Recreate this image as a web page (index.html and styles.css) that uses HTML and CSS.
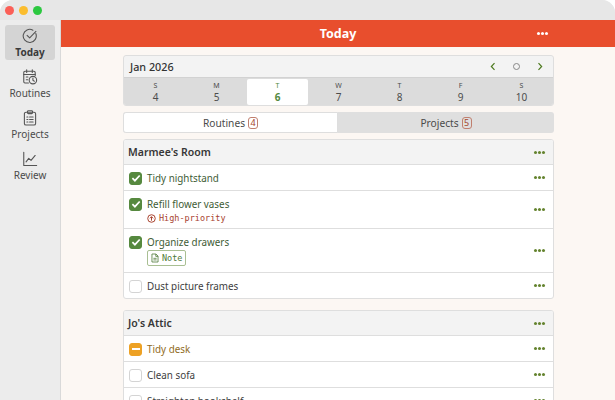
FILE: index.html

```html
<!DOCTYPE html>
<html lang="en">
<head>
    <meta charset="UTF-8">
    <meta name="viewport" content="width=device-width, initial-scale=1.0">
    <title>Today</title>
    <link rel="stylesheet" href="styles.css">
</head>
<body>
    <div class="window">
        <div class="titlebar">
            <span class="light red"></span>
            <span class="light yellow"></span>
            <span class="light green"></span>
        </div>
        <div class="app">
            <nav class="sidebar">
                <a class="nav-item active">
                    <svg class="nav-icon" viewBox="0.3 0.3 15.4 15.4"><path d="M13.6 5.6A6.3 6.3 0 1 1 10.8 2.4"/><path d="M5.2 7.4l2.5 2.5 6-6.3"/></svg>
                    <span>Today</span>
                </a>
                <a class="nav-item">
                    <svg class="nav-icon" viewBox="0.3 0.3 15.4 15.4"><path d="M6.5 13.8H3.2a1.2 1.2 0 0 1-1.2-1.2V3.6a1.2 1.2 0 0 1 1.2-1.2h8.6a1.2 1.2 0 0 1 1.2 1.2v3"/><path d="M2 5.6h11M4.8 1v2.6M10.2 1v2.6M4.4 8h1.6M4.4 10.6h1.4"/><circle cx="10.8" cy="11" r="3.6"/><path d="M10.8 9v2.2l1.4.8"/></svg>
                    <span>Routines</span>
                </a>
                <a class="nav-item">
                    <svg class="nav-icon" viewBox="0.3 0.3 15.4 15.4"><rect x="2.6" y="2.4" width="10.8" height="12.4" rx="1.6"/><rect x="5.6" y="1" width="4.8" height="2.8" rx=".8"/><path d="M5 7h1M5 9.4h1M5 11.8h1M7.6 7h3.4M7.6 9.4h3.4M7.6 11.8h3.4"/></svg>
                    <span>Projects</span>
                </a>
                <a class="nav-item">
                    <svg class="nav-icon" viewBox="0.3 0.3 15.4 15.4"><path d="M2 1.6v12.6h12.4"/><path d="M4.2 10.8l2.6-3.4 2.2 2 4-4.8"/></svg>
                    <span>Review</span>
                </a>
            </nav>
            <div class="main">
                <header class="topbar">
                    <h1>Today</h1>
                    <span class="dots white"><i></i><i></i><i></i></span>
                </header>
                <div class="content">
                    <section class="calendar">
                        <div class="cal-head">
                            <span class="cal-month">Jan 2026</span>
                            <div class="cal-controls">
                                <svg class="chev" viewBox="0 0 8 12"><path d="M6 1.5L1.8 6 6 10.5"/></svg>
                                <span class="cal-today"></span>
                                <svg class="chev" viewBox="0 0 8 12"><path d="M2 1.5L6.2 6 2 10.5"/></svg>
                            </div>
                        </div>
                        <div class="cal-days">
                            <div class="day"><small>S</small><b>4</b></div>
                            <div class="day"><small>M</small><b>5</b></div>
                            <div class="day current"><small>T</small><b>6</b></div>
                            <div class="day"><small>W</small><b>7</b></div>
                            <div class="day"><small>T</small><b>8</b></div>
                            <div class="day"><small>F</small><b>9</b></div>
                            <div class="day"><small>S</small><b>10</b></div>
                        </div>
                    </section>

                    <div class="tabs">
                        <div class="tab selected">Routines <span class="count">4</span></div>
                        <div class="tab">Projects <span class="count">5</span></div>
                    </div>

                    <section class="group">
                        <div class="group-head">
                            <h2>Marmee's Room</h2>
                            <span class="dots"><i></i><i></i><i></i></span>
                        </div>
                        <div class="row done">
                            <span class="check on"><svg viewBox="0 0 12 12"><path d="M2.4 6.2l2.5 2.5 4.8-5.2"/></svg></span>
                            <div class="row-body"><div class="row-title">Tidy nightstand</div></div>
                            <span class="dots"><i></i><i></i><i></i></span>
                        </div>
                        <div class="row done">
                            <span class="check on"><svg viewBox="0 0 12 12"><path d="M2.4 6.2l2.5 2.5 4.8-5.2"/></svg></span>
                            <div class="row-body">
                                <div class="row-title">Refill flower vases</div>
                                <div class="priority">
                                    <svg viewBox="0 0 10 10"><circle cx="5" cy="5" r="4.2"/><path d="M5 7.4V3M3.2 4.8L5 3l1.8 1.8"/></svg>
                                    High-priority
                                </div>
                            </div>
                            <span class="dots"><i></i><i></i><i></i></span>
                        </div>
                        <div class="row done">
                            <span class="check on"><svg viewBox="0 0 12 12"><path d="M2.4 6.2l2.5 2.5 4.8-5.2"/></svg></span>
                            <div class="row-body">
                                <div class="row-title">Organize drawers</div>
                                <div class="note">
                                    <svg viewBox="0 0 10 12"><path d="M1.2 1h5l2.6 2.6V11H1.2zM6 1v3h2.8M3 6.4h4M3 8.4h4"/></svg>
                                    Note
                                </div>
                            </div>
                            <span class="dots"><i></i><i></i><i></i></span>
                        </div>
                        <div class="row">
                            <span class="check"></span>
                            <div class="row-body"><div class="row-title">Dust picture frames</div></div>
                            <span class="dots"><i></i><i></i><i></i></span>
                        </div>
                    </section>

                    <section class="group">
                        <div class="group-head">
                            <h2>Jo's Attic</h2>
                            <span class="dots"><i></i><i></i><i></i></span>
                        </div>
                        <div class="row partial">
                            <span class="check half"><i></i></span>
                            <div class="row-body"><div class="row-title">Tidy desk</div></div>
                            <span class="dots"><i></i><i></i><i></i></span>
                        </div>
                        <div class="row">
                            <span class="check"></span>
                            <div class="row-body"><div class="row-title">Clean sofa</div></div>
                            <span class="dots"><i></i><i></i><i></i></span>
                        </div>
                        <div class="row">
                            <span class="check"></span>
                            <div class="row-body"><div class="row-title">Straighten bookshelf</div></div>
                            <span class="dots"><i></i><i></i><i></i></span>
                        </div>
                    </section>
                </div>
            </div>
        </div>
    </div>
</body>
</html>
```

FILE: styles.css

```css
:root {
    --accent: #e84e2d;
    --green: #56893f;
    --olive: #64832e;
    --line: #dedede;
    --cream: #fcf7f3;
    --text: #3d3d3d;
}
html, body {
    margin: 0;
    height: 100%;
    background-color: #fff;
    overflow: hidden;
}
body {
    font-family: "Noto Sans", sans-serif;
    color: var(--text);
}
.window {
    height: 400px;
    display: flex;
    flex-direction: column;
    border-radius: 13px 13px 0 0;
    overflow: hidden;
    background-color: #ececec;
}
.titlebar {
    flex: 0 0 20px;
    height: 20px;
    display: flex;
    align-items: center;
    gap: 5px;
    padding: 0 0 0 5px;
    background-color: #e7e7e7;
}
.light {
    width: 9px;
    height: 9px;
    border-radius: 50%;
}
.red { background-color: #fb5f57; }
.yellow { background-color: #fbbd2e; }
.green { background-color: #2cc840; }
.app {
    flex: 1;
    display: flex;
    min-height: 0;
}
.sidebar {
    width: 60px;
    flex: none;
    display: flex;
    flex-direction: column;
    align-items: center;
    gap: 6px;
    padding-top: 5px;
    border-right: 1px solid #d9d9d9;
}
.nav-item {
    width: 50px;
    height: 35px;
    box-sizing: border-box;
    padding-top: 3px;
    display: flex;
    flex-direction: column;
    align-items: center;
    gap: 1px;
    border-radius: 3px;
    font-size: 10px;
    line-height: 14px;
    color: #4b4b4b;
}
.nav-item.active {
    background-color: #d4d4d4;
    font-weight: 700;
    color: #3a3a3a;
}
.nav-icon {
    width: 16px;
    height: 16px;
    fill: none;
    stroke: #555;
    stroke-width: 1.05;
    stroke-linecap: round;
    stroke-linejoin: round;
}
.main {
    flex: 1;
    min-width: 0;
    display: flex;
    flex-direction: column;
    background-color: var(--cream);
}
.topbar {
    flex: 0 0 27px;
    display: flex;
    align-items: center;
    justify-content: center;
    position: relative;
    background-color: var(--accent);
    color: #fff;
}
.topbar h1 {
    margin: 0;
    font-size: 12.5px;
    font-weight: 700;
}
.topbar .dots {
    position: absolute;
    right: 67px;
    top: 12px;
}
.dots {
    display: flex;
    gap: 1px;
    flex: none;
}
.dots i {
    width: 3px;
    height: 3px;
    border-radius: 50%;
    background-color: var(--olive);
}
.dots.white i {
    background-color: #fff;
}
.content {
    width: 431px;
    margin-left: 62px;
    padding-top: 8px;
    display: flex;
    flex-direction: column;
}
.calendar {
    height: 51px;
    box-sizing: border-box;
    border: 1px solid var(--line);
    border-radius: 3px;
    overflow: hidden;
    background-color: #f3f3f3;
    flex: none;
}
.cal-head {
    height: 21px;
    display: flex;
    align-items: center;
    justify-content: space-between;
    padding: 0 10px 0 6px;
}
.cal-month {
    font-size: 10.8px;
    font-weight: 500;
    color: #333;
}
.cal-controls {
    display: flex;
    align-items: center;
    gap: 17px;
}
.chev {
    width: 6px;
    height: 9px;
    fill: none;
    stroke: #4d7a1f;
    stroke-width: 1.6;
}
.cal-today {
    width: 7px;
    height: 7px;
    box-sizing: border-box;
    border: 1px solid #888;
    border-radius: 50%;
}
.cal-days {
    height: 28px;
    display: grid;
    grid-template-columns: repeat(7, 61px);
    justify-content: center;
    background-color: #dcdcdc;
    border-top: 1px solid #d2d2d2;
    box-sizing: border-box;
}
.day {
    display: flex;
    flex-direction: column;
    align-items: center;
    color: #4c4c4c;
    padding-top: 2px;
    margin-top: 1px;
    border-radius: 2px;
}
.day small {
    font-size: 7px;
    line-height: 9px;
}
.day b {
    font-size: 10px;
    line-height: 14px;
    font-weight: 400;
}
.day.current {
    background-color: #fff;
    color: var(--green);
}
.day.current b {
    font-weight: 700;
}
.tabs {
    margin-top: 6px;
    height: 21px;
    flex: none;
    display: flex;
    border-radius: 3px;
    overflow: hidden;
    background-color: #dfdfdf;
}
.tab {
    flex: 1;
    display: flex;
    align-items: center;
    justify-content: center;
    gap: 3px;
    font-size: 10.2px;
    color: #4a4a4a;
}
.tab.selected {
    flex: 0 0 215px;
    background-color: #fff;
    box-sizing: border-box;
    border: 1px solid var(--line);
    border-radius: 3px 0 0 3px;
}
.count {
    width: 10px;
    height: 12px;
    box-sizing: border-box;
    display: flex;
    align-items: center;
    justify-content: center;
    border: 1px solid #c07f6e;
    border-radius: 3px;
    font-size: 9px;
    color: #a6452c;
}
.group {
    margin-top: 6px;
    box-sizing: border-box;
    border: 1px solid var(--line);
    border-radius: 3px;
    background-color: #fff;
    overflow: hidden;
    flex: none;
}
.group + .group {
    margin-top: 11px;
}
.group-head {
    height: 24px;
    display: flex;
    align-items: center;
    justify-content: space-between;
    padding: 0 8px 0 4px;
    background-color: #f3f3f3;
    border-bottom: 1px solid var(--line);
}
.group-head h2 {
    margin: 0;
    font-size: 10.5px;
    font-weight: 600;
    color: #373737;
}
.row {
    display: flex;
    align-items: center;
    min-height: 25px;
    padding: 0 8px 0 5px;
    border-bottom: 1px solid var(--line);
}
.row:last-child {
    border-bottom: none;
}
.check {
    flex: none;
    width: 13px;
    height: 13px;
    box-sizing: border-box;
    border: 1px solid #d4d4d4;
    border-radius: 3px;
    background-color: #fff;
    margin-right: 5px;
    align-self: flex-start;
    margin-top: 6.5px;
    display: flex;
    align-items: center;
    justify-content: center;
}
.check svg {
    width: 12px;
    height: 12px;
    fill: none;
    stroke: #fff;
    stroke-width: 1.7;
    flex: none;
}
.check.on {
    background-color: var(--green);
    border-color: var(--green);
}
.check.half {
    background-color: #eda124;
    border-color: #eda124;
}
.check.half i {
    width: 8px;
    height: 2px;
    background-color: #fff;
}
.row-body {
    flex: 1;
    min-width: 0;
    padding: 5px 0 4px;
    display: flex;
    flex-direction: column;
    align-items: flex-start;
}
.row-title {
    font-size: 9.85px;
    line-height: 16px;
}
.done .row-title {
    color: #3e5c35;
}
.partial .row-title {
    color: #8f6a22;
}
.priority {
    display: flex;
    align-items: center;
    gap: 3px;
    font-family: "DejaVu Sans Mono", monospace;
    font-size: 8.5px;
    line-height: 12px;
    color: #a8432f;
}
.priority svg {
    width: 9px;
    height: 9px;
    fill: none;
    stroke: #a8432f;
    stroke-width: 1.1;
}
.note {
    display: flex;
    align-items: center;
    gap: 3px;
    margin-bottom: 2px;
    height: 16px;
    box-sizing: border-box;
    padding: 0 3px;
    border: 1px solid #a9bf93;
    border-radius: 2px;
    font-family: "DejaVu Sans Mono", monospace;
    font-size: 8.5px;
    color: #4f7a38;
}
.note svg {
    width: 8px;
    height: 10px;
    fill: none;
    stroke: #4f7a38;
    stroke-width: 1;
}
```
